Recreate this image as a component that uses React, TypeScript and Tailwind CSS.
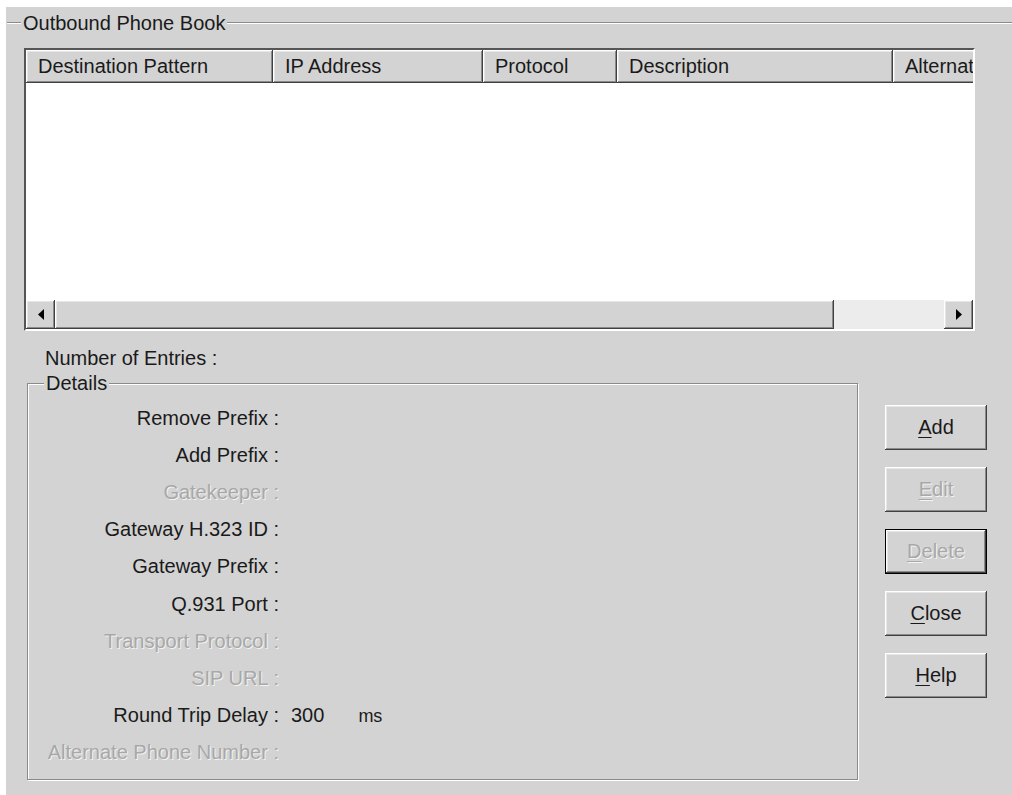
import type { ReactNode } from 'react';

type Row = { label: string; disabled?: boolean; value?: ReactNode };

const rows: Row[] = [
   { label: 'Remove Prefix :' },
   { label: 'Add Prefix :' },
   { label: 'Gatekeeper :', disabled: true },
   { label: 'Gateway H.323 ID :' },
   { label: 'Gateway Prefix :' },
   { label: 'Q.931 Port :' },
   { label: 'Transport Protocol :', disabled: true },
   { label: 'SIP URL :', disabled: true },
   {
      label: 'Round Trip Delay :',
      value: (
         <>
            <span>300</span>
            <span className="ml-[34px] text-[18px]">ms</span>
         </>
      ),
   },
   { label: 'Alternate Phone Number :', disabled: true },
];

const columns = [
   { name: 'Destination Pattern', width: 'w-[247px]' },
   { name: 'IP Address', width: 'w-[210px]' },
   { name: 'Protocol', width: 'w-[134px]' },
   { name: 'Description', width: 'w-[276px]' },
   { name: 'Alternate Number', width: 'w-[160px]' },
];

const buttons = [
   { key: 'A', rest: 'dd', disabled: false, isDefault: false },
   { key: 'E', rest: 'dit', disabled: true, isDefault: false },
   { key: 'D', rest: 'elete', disabled: true, isDefault: true },
   { key: 'C', rest: 'lose', disabled: false, isDefault: false },
   { key: 'H', rest: 'elp', disabled: false, isDefault: false },
];

// classic raised bevel used by buttons, headers and scrollbar parts
const raised =
   'shadow-[inset_-1px_-1px_0_#404040,inset_1px_1px_0_#ffffff,inset_-2px_-2px_0_#8a8a8a,inset_2px_2px_0_#e6e6e6]';
const raisedDefault =
   'shadow-[inset_0_0_0_1px_#000000,inset_-2px_-2px_0_#404040,inset_2px_2px_0_#ffffff,inset_-3px_-3px_0_#8a8a8a,inset_3px_3px_0_#e6e6e6]';

function Arrow({ dir }: { dir: 'left' | 'right' }) {
   return (
      <svg width="6" height="11" viewBox="0 0 6 11">
         {dir === 'left' ? (
            <path d="M6 0 L0 5.5 L6 11 Z" fill="#000" />
         ) : (
            <path d="M0 0 L6 5.5 L0 11 Z" fill="#000" />
         )}
      </svg>
   );
}

export default function App() {
   return (
      <div className="h-[795px] w-[1012px] overflow-hidden bg-white pl-[6px] pt-[7px] font-['Liberation_Sans',Arial,sans-serif] text-[20px] leading-[24px] text-[#1a1a1a]">
         <div className="h-full bg-[#d3d3d3]">
            {/* outer group caption */}
            <div className="flex h-[30px] items-center pt-[1px]">
               <div className="ml-[1px] w-[14px] border-t border-b border-t-[#8a8a8a] border-b-white" />
               <span className="px-[2px]">Outbound Phone Book</span>
               <div className="flex-1 border-t border-b border-t-[#8a8a8a] border-b-white" />
            </div>

            {/* list view */}
            <div className="ml-[18px] mt-[11px] h-[283px] w-[951px] border-2 border-t-[#555555] border-l-[#555555] border-r-white border-b-white">
               <div className="flex h-full flex-col bg-white">
                  <div className="flex h-[33px] shrink-0 overflow-hidden bg-[#d3d3d3] shadow-[inset_0_-2px_0_#555555]">
                     {columns.map((c) => (
                        <div
                           key={c.name}
                           className={`${c.width} flex shrink-0 items-center whitespace-nowrap pb-[1px] pl-[12px] ${raised}`}
                        >
                           {c.name}
                        </div>
                     ))}
                  </div>
                  <div className="flex-1 bg-white" />
                  <div className="flex h-[29px] shrink-0 bg-[#ececec]">
                     <div className={`flex w-[29px] items-center justify-center bg-[#d3d3d3] ${raised}`}>
                        <Arrow dir="left" />
                     </div>
                     <div className={`flex-1 bg-[#d3d3d3] ${raised}`} />
                     <div className="w-[110px]" />
                     <div className={`flex w-[29px] items-center justify-center bg-[#d3d3d3] ${raised}`}>
                        <Arrow dir="right" />
                     </div>
                  </div>
               </div>
            </div>

            <div className="ml-[39px] mt-[15px]">Number of Entries :</div>

            <div className="mt-[13px] flex items-start">
               {/* details group */}
               <div className="relative ml-[21px] h-[397px] w-[831px] border border-[#8a8a8a] shadow-[1px_1px_0_#ffffff,inset_1px_1px_0_#ffffff]">
                  <span className="absolute -top-[13px] left-[16px] bg-[#d3d3d3] px-[2px]">Details</span>
                  <div className="flex flex-col pt-[15px]">
                     {rows.map((r) => (
                        <div key={r.label} className="flex h-[37.2px] items-center">
                           <div
                              className={`w-[251px] shrink-0 whitespace-nowrap text-right ${
                                 r.disabled ? 'text-[#a8a8a8] [text-shadow:1px_1px_0_#f2f2f2]' : ''
                              }`}
                           >
                              {r.label}
                           </div>
                           {r.value && <div className="flex items-baseline pl-[12px]">{r.value}</div>}
                        </div>
                     ))}
                  </div>
               </div>

               {/* action buttons */}
               <div className="ml-[27px] mt-[22px] flex flex-col gap-[17px]">
                  {buttons.map((b) => (
                     <div
                        key={b.key}
                        className={`flex h-[45px] w-[102px] items-center justify-center bg-[#d3d3d3] pb-[1px] ${
                           b.isDefault ? raisedDefault : raised
                        } ${b.disabled ? 'text-[#a8a8a8] [text-shadow:1px_1px_0_#f4f4f4]' : ''}`}
                     >
                        <span>
                           <span className="underline decoration-1 underline-offset-[3px]">{b.key}</span>
                           {b.rest}
                        </span>
                     </div>
                  ))}
               </div>
            </div>
         </div>
      </div>
   );
}
